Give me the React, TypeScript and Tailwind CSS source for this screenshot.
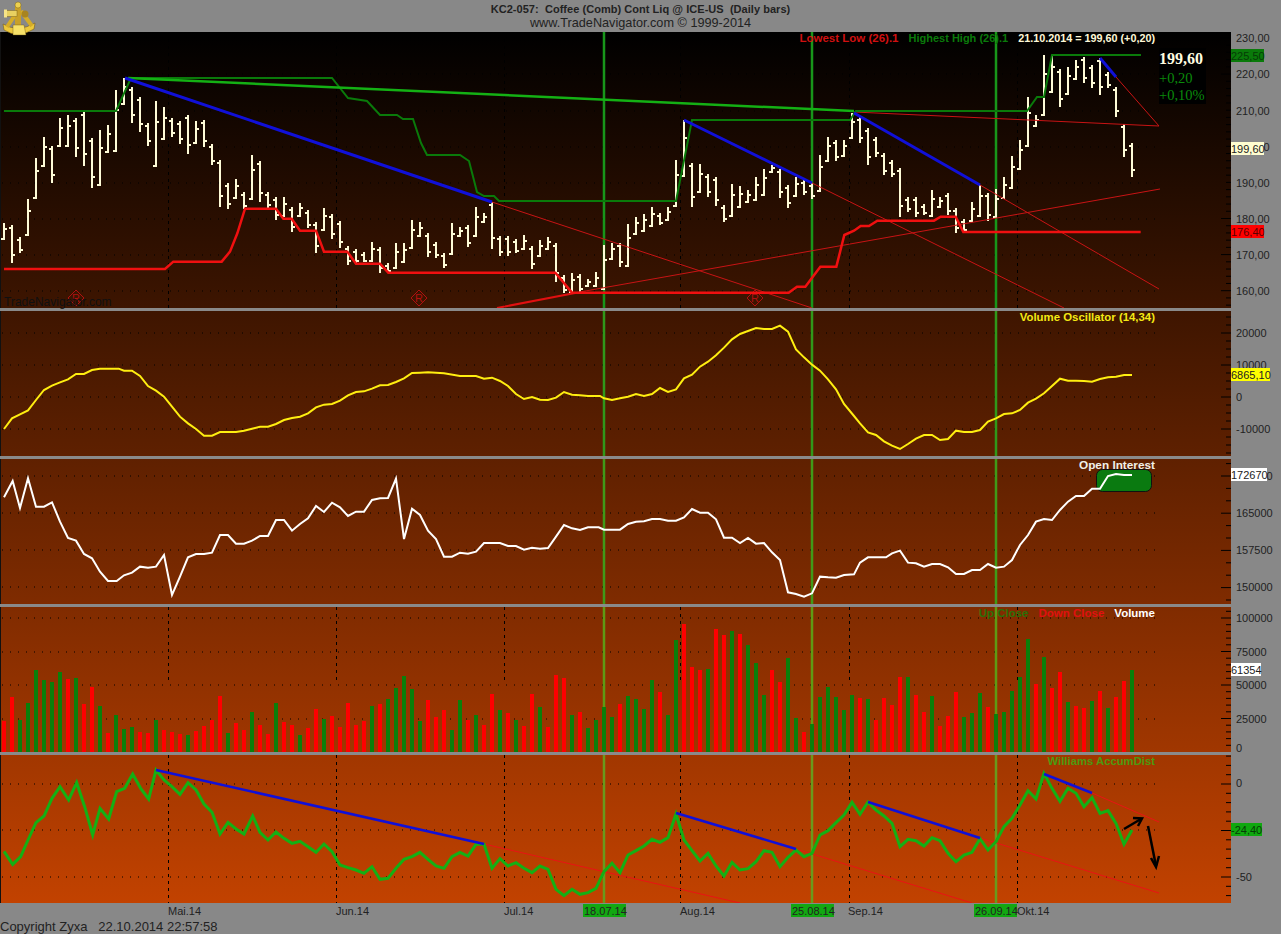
import React from 'react';

// all series were read off 3x crops, so z() maps crop coords back to page coords
const z = (ox: number, oy: number, pts: number[]) => {
  const out: string[] = [];
  for (let i = 0; i < pts.length; i += 2) out.push(`${ox + pts[i] / 3},${oy + pts[i + 1] / 3}`);
  return out.join(' ');
};

const barX = (i: number) => 4 + 8 * i;

// high / low of each daily bar in page pixels
const bars: [number, number][] = [
  [223, 240], [225, 263], [237, 253], [199, 236], [158, 199], [137, 167], [146, 183], [118, 147], [115, 147], [118, 157],
  [112, 166], [138, 188], [130, 186], [125, 153], [90, 152], [78, 105], [87, 123], [97, 132], [123, 146], [101, 167],
  [107, 140], [118, 137], [121, 144], [115, 154], [121, 144], [120, 147], [144, 165], [160, 207], [183, 209], [179, 199],
  [192, 209], [155, 200], [161, 202], [192, 208], [197, 220], [197, 217], [207, 232], [203, 217], [210, 228], [222, 253],
  [208, 231], [214, 239], [221, 248], [246, 265], [249, 263], [252, 262], [242, 262], [247, 273], [263, 272], [243, 269],
  [243, 263], [220, 249], [222, 237], [233, 257], [242, 258], [253, 268], [223, 255], [227, 237], [225, 247], [207, 237],
  [213, 223], [202, 249], [236, 256], [236, 256], [239, 253], [235, 250], [246, 269], [240, 257], [237, 250], [243, 282],
  [275, 293], [273, 293], [274, 293], [279, 287], [272, 287], [245, 290], [243, 260], [243, 267], [224, 267], [217, 235],
  [214, 232], [207, 227], [213, 225], [207, 221], [160, 207], [120, 177], [163, 207], [164, 193], [174, 197], [177, 206],
  [205, 222], [184, 217], [186, 208], [190, 203], [177, 201], [169, 196], [165, 173], [169, 198], [185, 208], [177, 197],
  [180, 195], [183, 199], [155, 192], [137, 162], [140, 161], [140, 157], [113, 139], [117, 143], [128, 165], [137, 157],
  [153, 175], [160, 177], [168, 217], [197, 212], [197, 217], [204, 215], [190, 217], [197, 208], [193, 215], [208, 233],
  [219, 232], [202, 222], [185, 217], [193, 221], [189, 218], [177, 199], [156, 189], [140, 170], [97, 147], [115, 127],
  [55, 116], [55, 93], [69, 107], [67, 95], [60, 80], [57, 83], [65, 88], [58, 95], [72, 88], [87, 117], [124, 157], [143, 177],
];

// volume bar tops in crop units: positive is a down close, negative an up close
const volume = [
  362, 290, -360, -308, -210, -240, -245, -217, 237, -233, 312, 262, -318, 398, -345, -388, -381, 396, 398, -360,
  390, 396, 403, -405, 392, 377, 360, 288, -400, 370, 390, -336, 375, 403, -308, 365, 375, -405, 385, 328,
  -358, 348, 380, 308, 375, 362, -318, 312, -297, -263, -228, -268, -362, 300, 350, 330, -390, -300, 360, -345,
  375, 282, -330, 340, -360, 378, 282, -320, 382, 225, 235, -345, 336, -385, -360, -320, -350, 312, -288, -296,
  -328, -240, 276, -345, -120, 72, 202, 210, -207, 87, 105, -93, 102, -136, -190, -285, 210, 245, -174, -355,
  396, -372, -292, -260, -292, -330, -285, 295, -297, 360, 295, 315, 232, -232, 285, 335, -288, 378, 348, 277,
  -350, -340, -280, 320, -342, -335, -272, -232, -117, 253, -172, 265, 217, -305, 318, 323, -303, 273, -323, 290, 243, -210,
];

const lowestLow = [
  z(0, 0, [12, 807, 495, 807, 520, 785, 665, 785, 690, 755, 712, 700, 735, 626, 828, 626, 850, 656, 875, 656, 900, 692, 948, 692, 972, 755, 1042, 755, 1068, 791, 1140, 791, 1165, 818, 1281, 818]),
  z(427, 0, [385, 818, 435, 878, 1085, 878, 1110, 860, 1135, 860, 1180, 800, 1228, 800, 1252, 705, 1281, 692]),
  z(854, 0, [20, 678, 45, 678, 70, 662, 240, 662, 260, 650, 305, 650, 328, 696, 860, 696]),
].join(' ');

const highestHigh = '4,111 116,111 131,78 332,78 348,98 367,101 380,115 397,115 403,119 413,119 421,143 427,155 460,155 469,161 477,192 484,196 494,196 499,201 676,201 692,120 850,120 856,111 1027,111 1037,97 1044,97 1052,55 1141,55';

const oscillator = [
  z(0, 300, [12, 387, 36, 355, 60, 343, 84, 331, 108, 300, 132, 270, 156, 257, 180, 247, 204, 238, 228, 222, 252, 222, 276, 210, 300, 206, 324, 206, 356, 206, 372, 212, 396, 212, 420, 228, 444, 258, 468, 272, 492, 290, 516, 320, 540, 350, 564, 370, 588, 387, 612, 407, 636, 407, 660, 396, 684, 396, 708, 396, 732, 392, 756, 386, 780, 380, 804, 380, 828, 372, 852, 360, 876, 354, 900, 350, 924, 340, 948, 322, 972, 314, 996, 312, 1020, 302, 1044, 286, 1068, 276, 1092, 274, 1116, 266, 1140, 256, 1164, 255, 1188, 246, 1212, 235, 1236, 219, 1260, 218]),
  z(427, 300, [3, 217, 51, 220, 99, 228, 147, 228, 171, 236, 195, 233, 219, 243, 243, 258, 267, 282, 291, 297, 315, 291, 339, 299, 363, 300, 387, 293, 411, 276, 435, 284, 459, 286, 483, 288, 519, 288, 531, 295, 555, 300, 579, 295, 603, 290, 627, 282, 651, 288, 675, 282, 699, 264, 723, 276, 747, 268, 771, 235, 795, 224, 819, 200, 843, 185, 867, 166, 891, 143, 915, 118, 939, 102, 963, 93, 987, 84, 1011, 87, 1035, 87, 1059, 77, 1083, 95, 1107, 148, 1131, 172, 1155, 194, 1179, 212, 1203, 238, 1227, 268, 1251, 312, 1281, 348]),
  z(854, 300, [18, 370, 42, 397, 66, 405, 90, 424, 114, 437, 138, 447, 162, 432, 186, 416, 210, 405, 234, 405, 258, 420, 282, 417, 306, 392, 330, 396, 354, 396, 378, 390, 402, 365, 426, 355, 450, 342, 474, 340, 498, 330, 522, 308, 546, 296, 570, 280, 594, 258, 618, 236, 642, 242, 666, 242, 690, 243, 714, 245, 738, 237, 762, 232, 786, 230, 810, 225, 834, 225]),
].join(' ');

const openInterest = [
  z(0, 300, [12, 592, 38, 543, 60, 624, 84, 535, 108, 620, 132, 620, 156, 607, 180, 665, 204, 714, 228, 722, 252, 762, 276, 775, 300, 815, 324, 843, 350, 843, 372, 826, 396, 818, 420, 800, 444, 803, 468, 800, 492, 765, 516, 885, 540, 830, 564, 772, 588, 762, 612, 762, 636, 758, 660, 705, 684, 705, 708, 731, 732, 731, 756, 722, 780, 708, 804, 708, 828, 660, 852, 660, 876, 692, 900, 672, 924, 655, 948, 618, 972, 636, 996, 608, 1020, 622, 1044, 648, 1068, 635, 1092, 635, 1116, 600, 1140, 595, 1164, 594, 1188, 536, 1212, 717, 1236, 626, 1260, 645]),
  z(427, 300, [3, 692, 27, 717, 51, 770, 75, 770, 99, 758, 123, 761, 147, 755, 171, 729, 195, 729, 219, 729, 243, 738, 267, 738, 291, 749, 315, 743, 339, 746, 363, 744, 387, 710, 411, 675, 435, 685, 459, 690, 483, 682, 515, 682, 531, 689, 555, 689, 579, 689, 603, 672, 627, 665, 651, 664, 675, 657, 699, 657, 723, 662, 747, 662, 771, 652, 795, 627, 819, 638, 843, 638, 867, 658, 891, 713, 915, 713, 939, 729, 963, 714, 987, 731, 1011, 729, 1035, 757, 1059, 780, 1083, 877, 1107, 882, 1131, 890, 1155, 880, 1179, 830, 1203, 832, 1227, 833, 1251, 825, 1281, 823]),
  z(854, 300, [18, 788, 42, 772, 66, 772, 96, 772, 114, 760, 138, 752, 162, 788, 186, 790, 210, 800, 234, 792, 258, 792, 282, 802, 306, 822, 330, 822, 354, 810, 378, 810, 402, 792, 426, 803, 450, 800, 474, 780, 498, 735, 522, 705, 546, 665, 570, 657, 594, 660, 618, 630, 642, 605, 666, 588, 690, 588, 714, 566, 738, 566, 762, 528, 786, 522, 810, 525, 834, 525]),
].join(' ');

const williams = [
  z(0, 600, [12, 754, 38, 793, 62, 770, 84, 720, 108, 668, 132, 648, 156, 595, 180, 560, 206, 600, 230, 548, 254, 620, 278, 705, 300, 625, 326, 657, 350, 575, 374, 565, 398, 522, 422, 565, 446, 597, 468, 510, 492, 540, 516, 560, 540, 583, 564, 548, 588, 570, 612, 612, 636, 637, 660, 702, 684, 667, 708, 687, 732, 702, 758, 648, 780, 697, 804, 720, 828, 696, 852, 715, 876, 730, 900, 724, 924, 740, 948, 757, 972, 732, 996, 755, 1020, 795, 1044, 803, 1068, 810, 1092, 820, 1116, 800, 1140, 838, 1164, 835, 1188, 805, 1212, 778, 1236, 770, 1260, 757]),
  z(427, 600, [3, 778, 27, 798, 51, 805, 75, 770, 99, 757, 123, 768, 147, 733, 171, 733, 195, 805, 219, 776, 243, 798, 267, 788, 291, 805, 315, 818, 339, 798, 363, 808, 387, 868, 411, 887, 435, 868, 459, 883, 483, 878, 507, 865, 531, 815, 555, 790, 579, 818, 603, 765, 627, 752, 651, 738, 675, 718, 699, 727, 723, 713, 747, 642, 771, 720, 795, 752, 819, 783, 843, 760, 867, 798, 891, 828, 915, 787, 939, 810, 963, 806, 987, 785, 1011, 752, 1035, 757, 1059, 800, 1083, 772, 1107, 750, 1131, 770, 1155, 760, 1179, 705, 1203, 692, 1227, 668, 1251, 645, 1275, 607]),
  z(854, 600, [18, 643, 42, 606, 66, 630, 90, 648, 114, 670, 138, 740, 162, 718, 186, 722, 210, 738, 234, 713, 258, 722, 282, 760, 306, 785, 330, 765, 354, 757, 378, 716, 402, 750, 426, 725, 450, 680, 474, 655, 498, 615, 522, 572, 546, 597, 570, 520, 594, 565, 618, 604, 642, 565, 666, 580, 690, 620, 714, 593, 738, 640, 762, 632, 786, 670, 810, 733, 834, 690]),
].join(' ');

const months = [168, 336, 504, 680, 849, 1017];

function Seg({ d, color, w = 1 }: { d: number[]; color: string; w?: number }) {
  return <line x1={d[0]} y1={d[1]} x2={d[2]} y2={d[3]} stroke={color} strokeWidth={w} />;
}

function Grid({ rows, step, top, bottom }: { rows: number[]; step: number; top: number; bottom: number }) {
  const ticks: React.ReactNode[] = [];
  for (let y = rows[0] - step * Math.floor((rows[0] - top) / step); y < bottom; y += step) {
    const major = rows.some((r) => Math.abs(r - y) < 0.6);
    ticks.push(<line key={y} x1={major ? 1221 : 1226} x2={1231} y1={y} y2={y} stroke="#000" />);
  }
  return (
    <g>
      {rows.map((y) => (
        <line key={y} x1={2} x2={1158} y1={y} y2={y} stroke="#000" strokeDasharray="1 7" />
      ))}
      {ticks}
    </g>
  );
}

function Months({ y1, y2 }: { y1: number; y2: number }) {
  return (
    <g>
      {months.map((x) => (
        <line key={x} x1={x + 0.5} x2={x + 0.5} y1={y1} y2={y2} stroke="#000" strokeDasharray="3 4" />
      ))}
    </g>
  );
}

function Markers({ color }: { color: string }) {
  return (
    <g>
      {[604, 812, 996].map((x) => (
        <line key={x} x1={x} x2={x} y1={0} y2={934} stroke={color} strokeWidth={2.5} />
      ))}
    </g>
  );
}

function Panel({ top, height, children, labels }: { top: number; height: number; children: React.ReactNode; labels?: React.ReactNode }) {
  return (
    <div className="relative shrink-0" style={{ height }}>
      <svg width={1231} height={height} viewBox={`0 ${top} 1231 ${height}`} className="block">
        <rect x={0} y={top} width={1} height={height} fill="#111" />
        {children}
      </svg>
      {labels}
    </div>
  );
}

function PriceBars() {
  return (
    <g shapeRendering="crispEdges" fill="#fffcd8">
      {bars.map(([hi, lo], i) => {
        const x = barX(i);
        const mid = (hi + lo) / 2;
        const prev = bars[i - 1];
        const rising = prev ? (prev[0] + prev[1]) / 2 > mid : true;
        const open = rising ? lo - 2 : hi + 2;
        const close = rising ? hi + (lo - hi) * 0.3 : lo - (lo - hi) * 0.25;
        return (
          <g key={i}>
            <rect x={x - 1} y={hi} width={2} height={lo - hi} />
            <rect x={x - 3} y={Math.round(open)} width={2} height={2} />
            <rect x={x + 1} y={Math.round(close)} width={2} height={2} />
          </g>
        );
      })}
    </g>
  );
}

function Diamond({ x }: { x: number }) {
  const y = 298;
  return (
    <g>
      <polygon points={`${x},${y - 8} ${x + 8},${y} ${x},${y + 8} ${x - 8},${y}`} fill="none" stroke="#b01010" />
      <text x={x} y={y + 4} textAnchor="middle" fontSize={11} fill="#b01010" fontFamily="Liberation Sans">R</text>
    </g>
  );
}

function Sextant() {
  return (
    <svg width={34} height={33} viewBox="2 2 34 33" className="relative z-10 ml-[2px] mt-[2px] overflow-visible">
      <path d="M3 24 Q18 33 35 23 L34 29 Q18 39 4 30 Z" fill="#ecc83c" stroke="#6a5010" strokeWidth={0.5} />
      <path d="M15 15 L7 27 M21 11 L32 26" stroke="#d4ac28" strokeWidth={4} fill="none" />
      <rect x={15} y={5} width={6} height={21} fill="#c8a028" />
      <circle cx={18} cy={5} r={3} fill="#ecd050" stroke="#6a5010" strokeWidth={0.4} />
      <circle cx={25} cy={14} r={3.5} fill="#a88420" />
      <rect x={5} y={10.5} width={12} height={6} fill="#e8d060" stroke="#6a5010" strokeWidth={0.4} />
      <rect x={4} y={9.5} width={3} height={8} fill="#f6e488" />
      <path d="M13 25 L24 25 L26 35 L13 35 Z" fill="#f6e068" stroke="#6a5010" strokeWidth={0.4} />
    </svg>
  );
}

const axisLabels: [number, string][] = [
  [38, '230,00'], [74, '220,00'], [111, '210,00'], [147, '200,00'], [183, '190,00'], [219, '180,00'], [255, '170,00'], [291, '160,00'],
  [333, '20000'], [365, '10000'], [397, '0'], [429, '-10000'],
  [476, '172500'], [513, '165000'], [550, '157500'], [587, '150000'],
  [618, '100000'], [652, '75000'], [685, '50000'], [719, '25000'], [748, '0'],
  [783, '0'], [877, '-50'],
];

const axisTags: { y: number; w: number; bg: string; fg: string; text: string }[] = [
  { y: 49, w: 33, bg: '#0a7a0a', fg: '#063c06', text: '225,50' },
  { y: 142, w: 33, bg: '#fffdd0', fg: '#222', text: '199,60' },
  { y: 225, w: 33, bg: '#ff0000', fg: '#5a0000', text: '176,40' },
  { y: 368, w: 39, bg: '#ffff00', fg: '#222', text: '6865,10' },
  { y: 468, w: 36, bg: '#ffffff', fg: '#222', text: '172670' },
  { y: 663, w: 30, bg: '#ffffff', fg: '#222', text: '61354' },
  { y: 823, w: 31, bg: '#0fa80f', fg: '#063c06', text: '-24,40' },
];

const dateLabels: { x: number; text: string; box?: boolean }[] = [
  { x: 168, text: 'Mai.14' },
  { x: 336, text: 'Jun.14' },
  { x: 504, text: 'Jul.14' },
  { x: 584, text: '18.07.14', box: true },
  { x: 680, text: 'Aug.14' },
  { x: 792, text: '25.08.14', box: true },
  { x: 848, text: 'Sep.14' },
  { x: 975, text: '26.09.14', box: true },
  { x: 1017, text: 'Okt.14' },
];

export default function App() {
  return (
    <div className="flex h-[934px] w-[1281px] flex-col overflow-hidden bg-[#888888] font-['Liberation_Sans',Arial,sans-serif]">
      {/* Title bar */}
      <header className="relative z-10 grid h-[32px] shrink-0 grid-cols-[40px_1fr_40px]">
        <Sextant />
        <div className="flex flex-col items-center text-[#222]">
          <div className="mt-[2px] h-[14px] whitespace-pre text-[11px] font-bold leading-[14px] tracking-[0.04px]">KC2-057:  Coffee (Comb) Cont Liq @ ICE-US  (Daily bars)</div>
          <div className="h-[15px] text-[12.7px] leading-[15px]">www.TradeNavigator.com © 1999-2014</div>
        </div>
      </header>

      <div className="flex shrink-0">
        {/* Chart panes share one gradient */}
        <main className="flex h-[871px] w-[1231px] shrink-0 flex-col bg-linear-to-b/srgb from-black to-[#c24200]">
          <Panel
            top={32}
            height={276}
            labels={
              <>
                <div className="absolute left-[4px] top-[264px] text-[12px] leading-[13px] text-[#101010]">TradeNavigator.com</div>
                <div className="absolute right-[76px] top-0 flex gap-[10px] font-bold leading-[13px]">
                  <span className="text-[11.5px] text-[#d01010]">Lowest Low (26).1</span>
                  <span className="text-[11px] text-[#0a7a0a]">Highest High (26).1</span>
                  <span className="text-[10.8px] text-[#fff8d8]">21.10.2014 = 199,60 (+0,20)</span>
                </div>
                <div className="absolute left-[1159px] top-[16px] flex h-[56px] w-[47px] flex-col bg-black font-['Liberation_Serif',serif] font-bold">
                  <span className="h-[22px] text-[16px] leading-[22px] text-[#fffde0]">199,60</span>
                  <span className="h-[17px] text-[14.5px] font-normal leading-[17px] text-[#0a8a0a]">+0,20</span>
                  <span className="h-[17px] text-[14.5px] font-normal leading-[17px] text-[#0a8a0a]">+0,10%</span>
                </div>
              </>
            }
          >
            <Grid rows={[38, 74, 111, 147, 183, 219, 255, 291]} step={7.22} top={32} bottom={308} />
            <Months y1={32} y2={308} />
            <Diamond x={76} />
            <Diamond x={419} />
            <Diamond x={755} />
            <Markers color="#18961a" />
            <PriceBars />
            <Seg d={[497, 308, 575, 293]} color="#e01010" w={2} />
            <Seg d={[574, 293, 1160, 189]} color="#c81414" />
            <Seg d={[492, 202, 812, 308]} color="#c81414" />
            <Seg d={[812, 183, 1064, 308]} color="#c81414" />
            <Seg d={[980, 185, 1159, 289]} color="#c81414" />
            <Seg d={[854, 112, 1159, 126]} color="#c81414" />
            <Seg d={[1116, 77, 1159, 126]} color="#c81414" />
            <polyline points={lowestLow} fill="none" stroke="#f01010" strokeWidth={2.5} />
            <polyline points={highestHigh} fill="none" stroke="#0a7a0a" strokeWidth={2} />
            <Seg d={[128, 78, 854, 111]} color="#14b014" w={2.5} />
            <Seg d={[125, 78, 492, 202]} color="#1010d8" w={3} />
            <Seg d={[684, 120, 812, 183]} color="#1010d8" w={3} />
            <Seg d={[854, 113, 980, 185]} color="#1010d8" w={3} />
            <Seg d={[1100, 58, 1116, 77]} color="#1010d8" w={3} />
          </Panel>
          <div className="h-[3px] shrink-0 bg-[#8a8a8a]" />

          <Panel
            top={311}
            height={145}
            labels={<div className="absolute right-[76px] top-0 text-[11.4px] font-bold leading-[12px] text-[#f4e814]">Volume Oscillator (14,34)</div>}
          >
            <Grid rows={[333, 365, 397, 429]} step={8} top={311} bottom={456} />
            <Markers color="#30981a" />
            <polyline points={oscillator} fill="none" stroke="#ffee10" strokeWidth={2} />
          </Panel>
          <div className="h-[3px] shrink-0 bg-[#8a8a8a]" />

          <Panel
            top={459}
            height={145}
            labels={<div className="absolute right-[76px] top-0 text-[11.8px] font-bold leading-[12px] text-[#f0f0e8]">Open Interest</div>}
          >
            <Grid rows={[476, 513, 550, 587]} step={12.4} top={459} bottom={604} />
            <Markers color="#409a18" />
            <rect x={1096.5} y={469.5} width={55} height={22} rx={6} fill="#0a7a10" stroke="#111" />
            <polyline points={openInterest} fill="none" stroke="#fff" strokeWidth={2} />
          </Panel>
          <div className="h-[3px] shrink-0 bg-[#8a8a8a]" />

          <Panel
            top={607}
            height={145}
            labels={
              <div className="absolute right-[76px] top-0 flex gap-[10px] text-[11.5px] font-bold leading-[12px]">
                <span className="text-[#2c7008]">Up Close</span>
                <span className="text-[#e01010]">Down Close</span>
                <span className="text-white">Volume</span>
              </div>
            }
          >
            <Grid rows={[618, 652, 685, 719]} step={6.7} top={607} bottom={752} />
            <Months y1={607} y2={680} />
            <Markers color="#5f9a14" />
            <g shapeRendering="crispEdges">
              {volume.map((v, i) => {
                const y = 600 + Math.abs(v) / 3;
                return <rect key={i} x={barX(i) - 2} y={y} width={4} height={752 - y} fill={v > 0 ? '#ff0000' : '#0a7f0a'} />;
              })}
            </g>
          </Panel>
          <div className="h-[3px] shrink-0 bg-[#8a8a8a]" />

          <Panel
            top={755}
            height={148}
            labels={<div className="absolute right-[76px] top-0 text-[11.3px] font-bold leading-[12px] text-[#4c9a10]">Williams AccumDist</div>}
          >
            <Grid rows={[784, 830, 877]} step={9.3} top={755} bottom={903} />
            <Months y1={755} y2={903} />
            <Markers color="#6a9a1c" />
            <Seg d={[484, 844, 740, 903]} color="#e81414" />
            <Seg d={[796, 849, 972, 903]} color="#e81414" />
            <Seg d={[980, 838, 1159, 893]} color="#e81414" />
            <Seg d={[1092, 793, 1159, 822]} color="#e81414" />
            <polyline points={williams} fill="none" stroke="#14b014" strokeWidth={3} />
            <Seg d={[156, 770, 484, 844]} color="#1010d8" w={2.5} />
            <Seg d={[676, 813, 796, 849]} color="#1010d8" w={2.5} />
            <Seg d={[868, 802, 980, 838]} color="#1010d8" w={2.5} />
            <Seg d={[1044, 774, 1092, 793]} color="#1010d8" w={2.5} />
            <g stroke="#000" strokeWidth={2.5} fill="none">
              <path d="M1124 829 L1141 819" />
              <path d="M1133 818 L1142 818.5 L1138 826" />
              <path d="M1148 826 L1156 866" />
              <path d="M1151 858 L1156 867 L1159 856" />
            </g>
          </Panel>
        </main>

        {/* Price scale */}
        <svg width={50} height={871} viewBox="1231 32 50 871" className="block shrink-0" fontFamily="Liberation Sans" fontSize={11}>
          {axisLabels.map(([y, text]) => (
            <text key={y} x={1236} y={y + 4} fill="#222">{text}</text>
          ))}
          {axisTags.map((t) => (
            <g key={t.text}>
              <rect x={1231} y={t.y} width={t.w} height={13} fill={t.bg} />
              <text x={1231} y={t.y + 10.5} fill={t.fg}>{t.text}</text>
            </g>
          ))}
        </svg>
      </div>

      {/* Date scale */}
      <svg width={1281} height={16} viewBox="0 903 1281 16" className="block shrink-0" fontFamily="Liberation Sans" fontSize={11}>
        {dateLabels.map((d) => (
          <g key={d.text}>
            {d.box && <rect x={d.x - 1} y={904} width={43} height={13} fill="#12a812" />}
            <text x={d.x} y={914.5} fill="#222">{d.text}</text>
          </g>
        ))}
      </svg>
      <div className="h-[15px] shrink-0 whitespace-pre text-[13px] leading-[15px] text-[#222]">Copyright Zyxa   22.10.2014 22:57:58</div>
    </div>
  );
}
